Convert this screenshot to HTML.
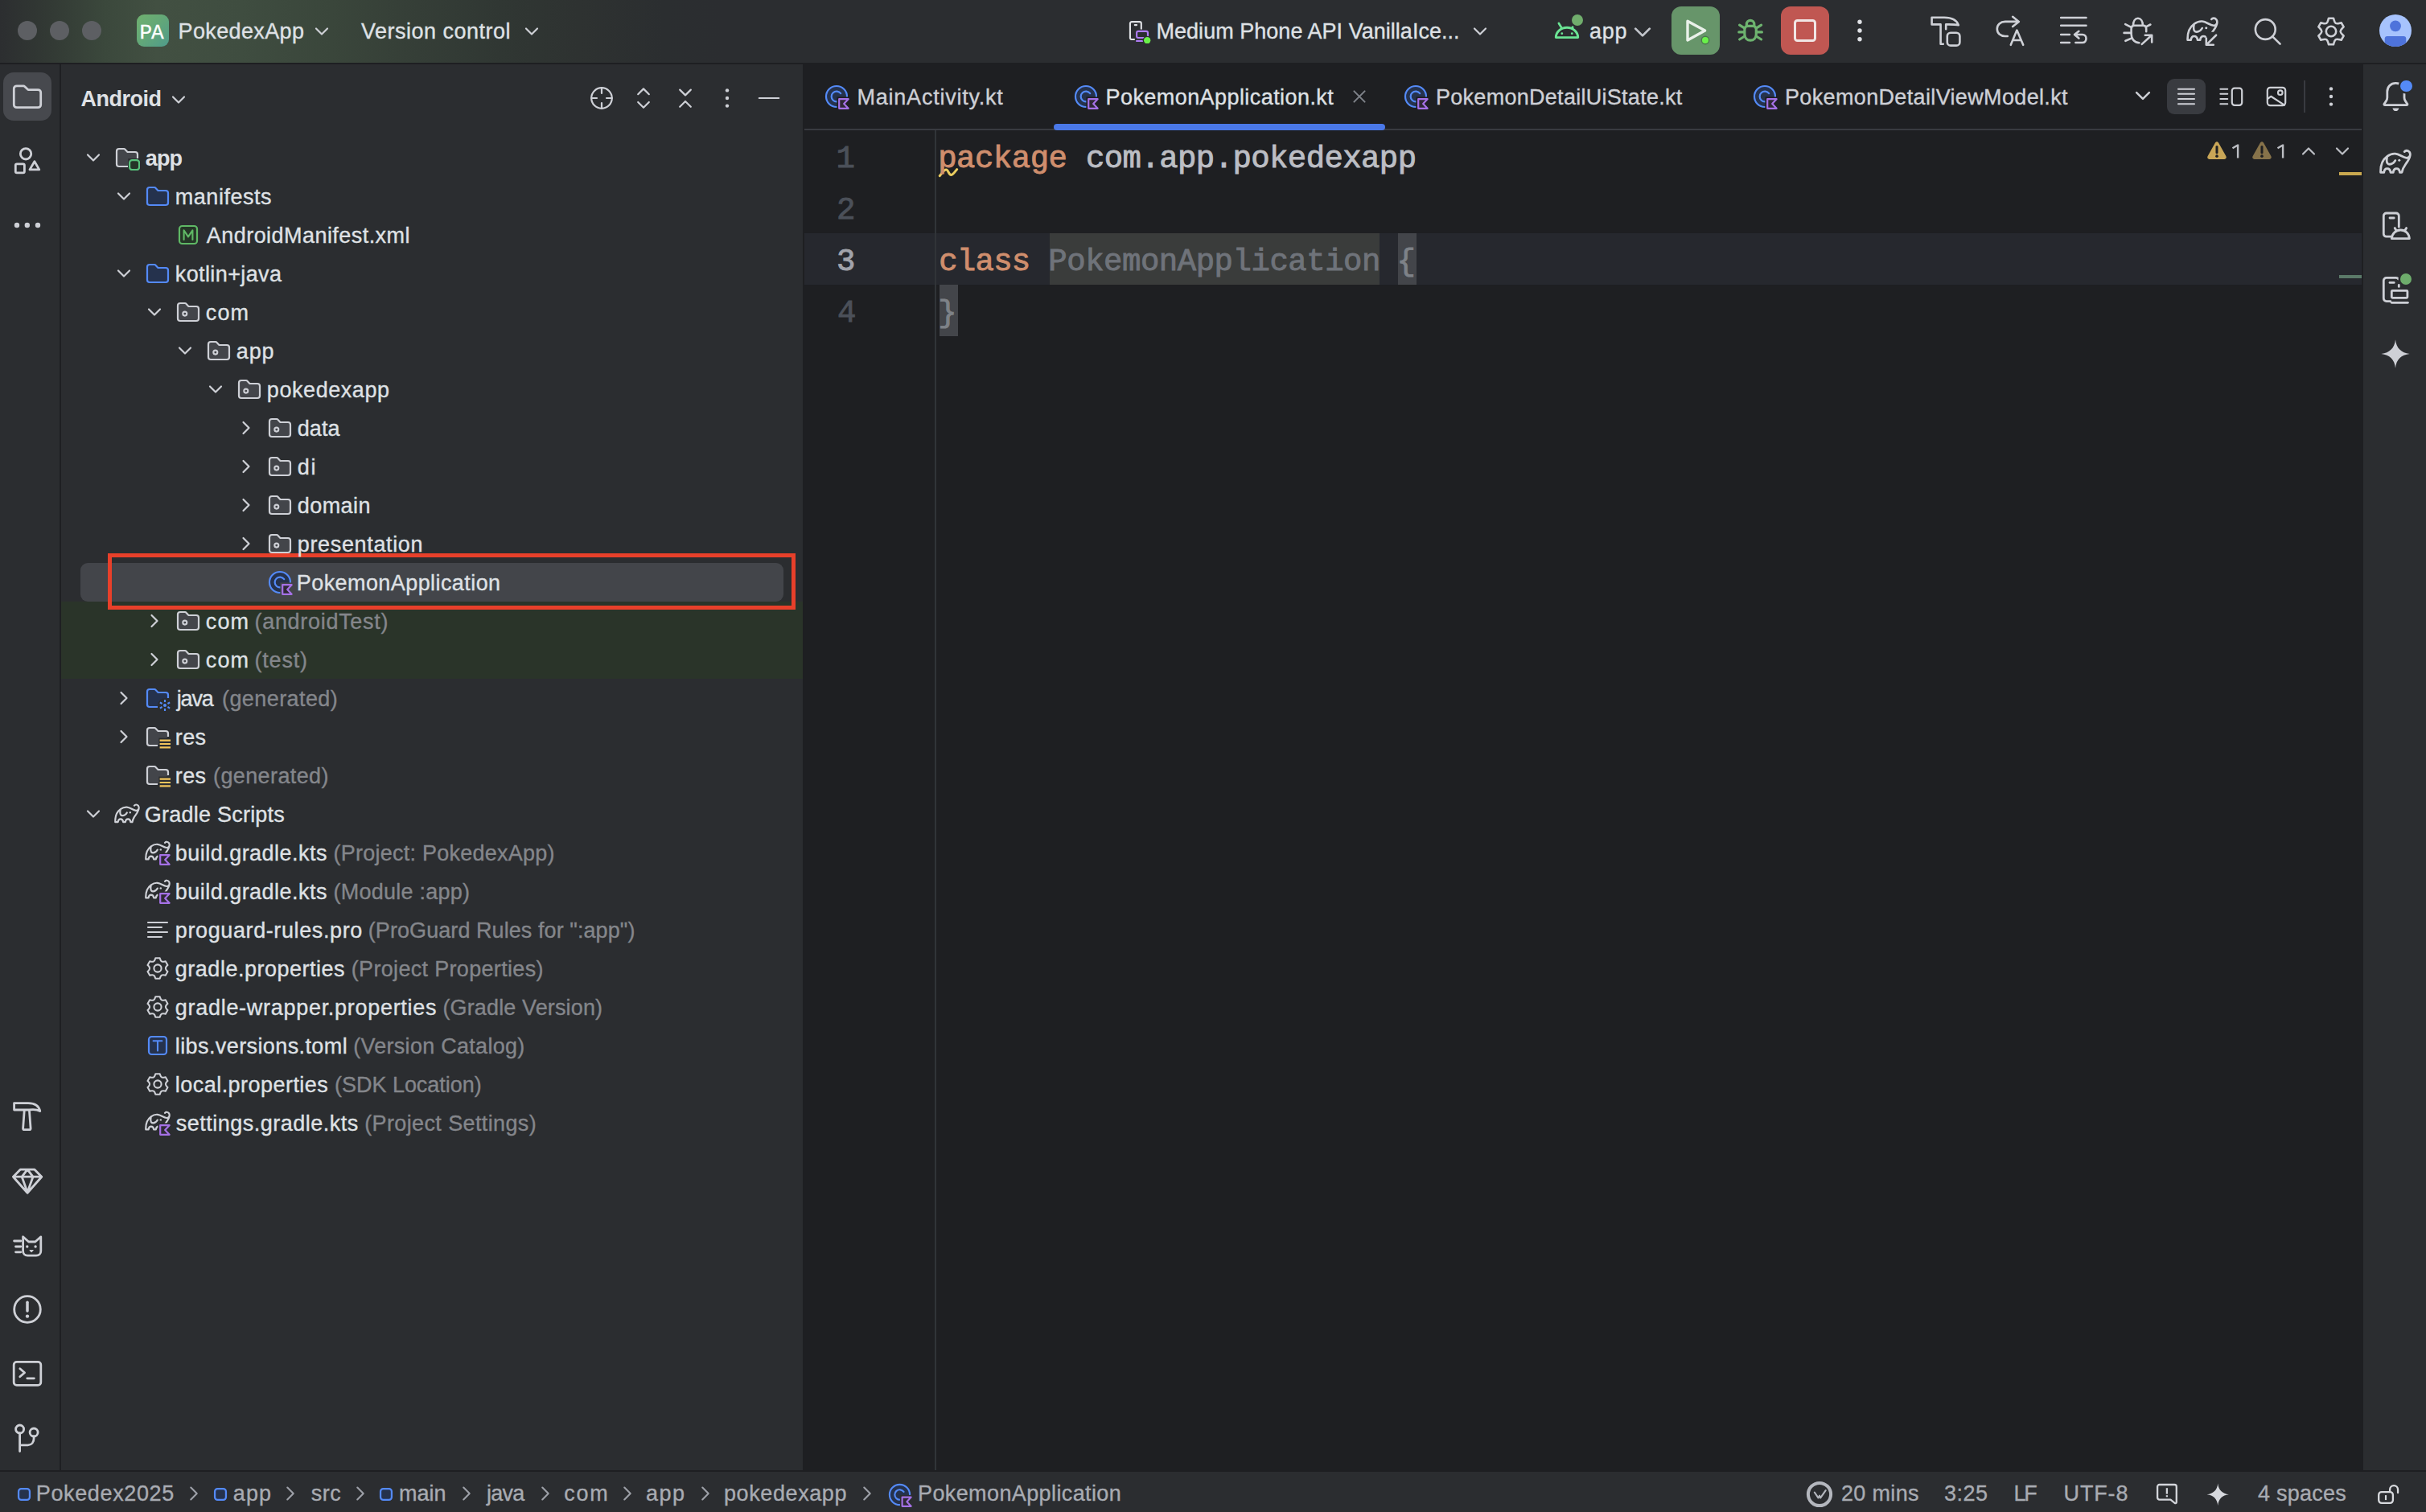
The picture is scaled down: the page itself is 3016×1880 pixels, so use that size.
<!DOCTYPE html>
<html><head><meta charset="utf-8"><title>PokedexApp</title>
<style>
html,body{margin:0;padding:0;background:#2b2d30;}
body{width:3016px;height:1880px;position:relative;overflow:hidden;font-family:"Liberation Sans", sans-serif;}
body>div,body>svg,body>span{position:absolute;display:block}
span{white-space:pre;}
span.s{font-family:"Liberation Sans", sans-serif;-webkit-text-stroke:0.35px;}
span.m{font-family:"Liberation Mono", monospace;-webkit-text-stroke:0.9px;}
</style></head><body>
<div style="left:0px;top:0px;width:3016px;height:78px;background:#2b2d30;"></div>
<div style="left:0;top:0;width:900px;height:78px;background:linear-gradient(90deg,#2c2e30 0px,#323934 60px,#3b483c 130px,#425042 194px,#3f4d40 300px,#3a463b 412px,#353e37 520px,#303733 620px,#2e3231 720px,#2b2e30 825px,#2b2d30 900px)"></div>
<div style="left:0px;top:78px;width:3016px;height:2px;background:#1e1f22;"></div>
<div style="left:0px;top:80px;width:74px;height:1748px;background:#2b2d30;"></div>
<div style="left:74px;top:80px;width:2px;height:1748px;background:#1e1f22;"></div>
<div style="left:76px;top:80px;width:922px;height:1748px;background:#2b2d30;"></div>
<div style="left:998px;top:78px;width:1940px;height:1750px;background:#1e1f22;"></div>
<div style="left:2938px;top:80px;width:78px;height:1748px;background:#2b2d30;"></div>
<div style="left:0px;top:1828px;width:3016px;height:2px;background:#1e1f22;"></div>
<div style="left:0px;top:1830px;width:3016px;height:50px;background:#2b2d30;"></div>
<div style="left:22px;top:26px;width:24px;height:24px;background:#5d5f63;border-radius:12px;"></div>
<div style="left:62px;top:26px;width:24px;height:24px;background:#5d5f63;border-radius:12px;"></div>
<div style="left:102px;top:26px;width:24px;height:24px;background:#5d5f63;border-radius:12px;"></div>
<div style="left:170px;top:18px;width:40px;height:40px;border-radius:9px;background:linear-gradient(135deg,#6fb06f 0%,#64a877 45%,#4f9b8b 100%)"></div>
<span class="m" style="left:173.6px;top:26px;font-size:26px;line-height:30px;letter-spacing:-1.2px;color:#ffffff;-webkit-text-stroke:0.3px;">PA</span>
<span class="s" style="left:221.5px;top:24px;font-size:27px;line-height:30px;letter-spacing:0.38px;color:#dfe1e5;">PokedexApp</span>
<svg style="left:384.0px;top:22.6px;" width="32" height="32" viewBox="0 0 16 16" fill="none"><path d="M4.5 6.25L8 9.75L11.5 6.25" stroke="#ced0d6" stroke-width="1.1" stroke-linecap="round" stroke-linejoin="round"/></svg>
<span class="s" style="left:449px;top:24px;font-size:27px;line-height:30px;letter-spacing:0.49px;color:#dfe1e5;">Version control</span>
<svg style="left:644.5px;top:22.6px;" width="32" height="32" viewBox="0 0 16 16" fill="none"><path d="M4.5 6.25L8 9.75L11.5 6.25" stroke="#ced0d6" stroke-width="1.1" stroke-linecap="round" stroke-linejoin="round"/></svg>
<svg style="left:1400.0px;top:22.0px;" width="32" height="32" viewBox="0 0 16 16" fill="none"><path d="M5 13.5H3.5C2.93 13.5 2.47 13.04 2.47 12.47V3.56C2.47 2.99 2.93 2.53 3.5 2.53H8.37C8.94 2.53 9.4 2.99 9.4 3.56V6.9" stroke="#dfe1e5" stroke-width="1.07" stroke-linecap="round" stroke-linejoin="round" /><path d="M5.4 4.55H6.55" stroke="#dfe1e5" stroke-width="1.07" stroke-linecap="round" stroke-linejoin="round" /><rect x="6.57" y="8.43" width="6.91" height="4.07" rx="1" stroke="#ae7bf3" stroke-width="1.07"/><path d="M6.1 14.48H12" stroke="#ae7bf3" stroke-width="1.07"/><circle cx="13.1" cy="14.1" r="2.75" fill="#2b2d30"/><circle cx="13.1" cy="14.1" r="2.07" fill="#6af04a"/></svg>
<span class="s" style="left:1437.5px;top:24px;font-size:27px;line-height:30px;letter-spacing:0.03px;color:#dfe1e5;">Medium Phone API VanillaIce...</span>
<svg style="left:1824.0px;top:22.6px;" width="32" height="32" viewBox="0 0 16 16" fill="none"><path d="M4.5 6.25L8 9.75L11.5 6.25" stroke="#ced0d6" stroke-width="1.1" stroke-linecap="round" stroke-linejoin="round"/></svg>
<svg style="left:1930px;top:22px;" width="36" height="30" viewBox="0 0 36 30" fill="none"><path d="M4.3 24.6A13.7 12.3 0 0 1 31.7 24.6Z" stroke="#6be494" stroke-width="2.9" stroke-linecap="round" stroke-linejoin="round" /><path d="M7.9 7L11.6 13M28.1 7L24.4 13" stroke="#6be494" stroke-width="2.7" stroke-linecap="round" stroke-linejoin="round" /><circle cx="11.8" cy="19.7" r="1.4" fill="#6be494"/><circle cx="24.3" cy="19.7" r="1.4" fill="#6be494"/></svg>
<div style="left:1953.9px;top:17.7px;width:14.4px;height:14.4px;border-radius:50%;background:#70ad6c;box-shadow:0 0 0 2.6px #2b2d30"></div>
<span class="s" style="left:1976px;top:24px;font-size:27px;line-height:30px;letter-spacing:0.73px;color:#dfe1e5;">app</span>
<svg style="left:2022.0px;top:20.2px;" width="40" height="40" viewBox="0 0 16 16" fill="none"><path d="M4.5 6.25L8 9.75L11.5 6.25" stroke="#c2c5cb" stroke-width="1.1" stroke-linecap="round" stroke-linejoin="round"/></svg>
<div style="left:2078px;top:8px;width:60px;height:60px;background:#67956a;border-radius:12px;"></div>
<svg style="left:2088.0px;top:18.0px;" width="40" height="40" viewBox="0 0 20 20" fill="none"><path d="M5 4.1L15.8 10.05L5 16Z" stroke="#e9f1e9" stroke-width="1.7" stroke-linecap="round" stroke-linejoin="round" /></svg>
<div style="left:2116.4px;top:46.25px;width:7.8px;height:7.8px;border-radius:50%;background:#6af04a;box-shadow:0 0 0 1.4px #4a784c"></div>
<svg style="left:2156.0px;top:18.0px;" width="40" height="40" viewBox="0 0 20 20" fill="none"><path d="M6.45 9.3C6.45 8 7.3 7.15 8.5 7.15H11.6C12.8 7.15 13.65 8 13.65 9.3V12.4C13.65 14.6 12.1 16.1 10.05 16.1C8 16.1 6.45 14.6 6.45 12.4Z" stroke="#6db36f" stroke-width="1.6" stroke-linecap="round" stroke-linejoin="round" /><path d="M7.7 7V6A2.35 2.35 0 0 1 12.4 6V7" stroke="#6db36f" stroke-width="1.6" stroke-linecap="round" stroke-linejoin="round" /><path d="M2.9 10.95H6.3M13.8 10.95H17.2M3.3 6.6L6.5 8.6M16.8 6.6L13.6 8.6M3.3 15.5L6.5 13.5M16.8 15.5L13.6 13.5" stroke="#6db36f" stroke-width="1.6" stroke-linecap="round" stroke-linejoin="round" /></svg>
<div style="left:2214px;top:8px;width:60px;height:60px;background:#c05752;border-radius:12px;"></div>
<div style="left:2230px;top:24.2px;width:28px;height:27.6px;border-radius:4.5px;border:3px solid #f1e6e5;box-sizing:border-box"></div>
<svg style="left:2292.0px;top:18.0px;" width="40" height="40" viewBox="0 0 20 20" fill="none"><circle cx="10" cy="4.6" r="1.35" fill="#dfe1e5"/><circle cx="10" cy="10" r="1.35" fill="#dfe1e5"/><circle cx="10" cy="15.4" r="1.35" fill="#dfe1e5"/></svg>
<svg style="left:2398.6px;top:18.5px;" width="40" height="40" viewBox="0 0 20 20" fill="none"><path d="M1.3 1.4H9C13.6 1.4 16.8 3 17.9 6.1C15.6 5.6 13.2 5.7 10.1 5.7V8.6M6.8 5.7V17.9H8.4M6.8 5.7H1.3V1.4" stroke="#ced0d6" stroke-width="1.3" stroke-linecap="round" stroke-linejoin="round" /><rect x="10.9" y="10.9" width="7.8" height="7.9" rx="2.1" stroke="#ced0d6" stroke-width="1.3"/></svg>
<svg style="left:2478.5px;top:18.5px;" width="40" height="40" viewBox="0 0 20 20" fill="none"><path d="M15.2 3.95H6.9C4 3.95 1.9 5.8 1.9 8.5C1.9 11.2 4 13 6.9 13H8.4M11.6 0.9L15.4 3.95L11.6 7" stroke="#ced0d6" stroke-width="1.3" stroke-linecap="round" stroke-linejoin="round" /><path d="M10.4 18.4L14.2 9.3L18.1 18.4M11.6 15.5H16.9" stroke="#ced0d6" stroke-width="1.3" stroke-linecap="round" stroke-linejoin="round" /></svg>
<svg style="left:2558.0px;top:18.5px;" width="40" height="40" viewBox="0 0 20 20" fill="none"><path d="M2.1 1.5H17.75M2.1 6.4H17.75M2.1 12H7.45M2.1 17H7.45" stroke="#ced0d6" stroke-width="1.3" stroke-linecap="round" stroke-linejoin="round" /><path d="M10.6 12H15.4C16.9 12 17.75 13.1 17.75 14.5C17.75 15.9 16.9 17 15.4 17H11.2M13.2 9.9L10.5 12L13.2 14.3" stroke="#ced0d6" stroke-width="1.3" stroke-linecap="round" stroke-linejoin="round" /></svg>
<svg style="left:2638.0px;top:18.5px;" width="40" height="40" viewBox="0 0 20 20" fill="none"><path d="M10.7 17.1C7.6 17 5.8 14.6 5.8 11.6V8.4C5.8 7.2 6.6 6.4 7.8 6.4H13.2C14.4 6.4 15.1 7.3 15.1 8.4V10.1" stroke="#ced0d6" stroke-width="1.3" stroke-linecap="round" stroke-linejoin="round" /><path d="M7 6.3C7 3.6 8.2 1.9 9.95 1.9C11.7 1.9 12.95 3.6 12.95 6.3" stroke="#ced0d6" stroke-width="1.3" stroke-linecap="round" stroke-linejoin="round" /><path d="M5.8 10.95H1.3M6 7.6L2.1 5.6M6.2 14.2L2.2 15.9M14.9 7.2L17.7 5.75" stroke="#ced0d6" stroke-width="1.3" stroke-linecap="round" stroke-linejoin="round" /><path d="M12.4 17.95L18.5 12.4M14.4 12.35H18.6V16.7" stroke="#ced0d6" stroke-width="1.3" stroke-linecap="round" stroke-linejoin="round" /></svg>
<svg style="left:2718.0px;top:18.5px;" width="40" height="40" viewBox="0 0 20 20" fill="none"><defs><clipPath id="syc"><path d="M-1 -1H21V10.4H15.4L10.6 15.2V21H-1Z"/></clipPath></defs><g clip-path="url(#syc)"><g transform="translate(0,-1) scale(1.25)"><path d="M12.5 2.8C13 2.1 14.2 2 15 3C15.8 4.2 15.2 6 13.5 8.4C12.6 9.7 11.6 10.8 11.2 13.1H10.2C10.1 12.2 9.6 11.2 8.55 11.2C7.5 11.2 7 12.2 6.9 13.1H5.6C5.5 12.2 5 11.2 3.9 11.2C2.8 11.2 2.4 12.2 2.3 13.1H0.65C0.5 9.5 1.8 6.6 3.9 5.1C5.2 4.1 6.6 3.7 7.9 3.8C10 4 11.6 5.7 13.5 5.9C14.3 5.95 14.8 5.6 15.1 5M3.9 5.1C3.6 6.5 3.5 7.8 4 8.5C4.7 9.4 6 9 6.9 8.4C7.4 8 7.7 7.6 7.9 7.2" stroke="#ced0d6" stroke-width="1.04" stroke-linecap="round" stroke-linejoin="round" /><circle cx="9.9" cy="7.1" r="0.6" fill="#ced0d6"/></g></g><path d="M18.55 12.35L12.5 18.3M12.4 14.25V18.4H16.9" stroke="#ced0d6" stroke-width="1.3" stroke-linecap="round" stroke-linejoin="round" /></svg>
<svg style="left:2798.7px;top:18.5px;" width="40" height="40" viewBox="0 0 20 20" fill="none"><circle cx="8.65" cy="8.75" r="6.2" stroke="#ced0d6" stroke-width="1.3"/><path d="M13.2 13.3L17.8 17.8" stroke="#ced0d6" stroke-width="1.3" stroke-linecap="round" stroke-linejoin="round" /></svg>
<svg style="left:2878.0px;top:18.6px;" width="40" height="40" viewBox="0 0 20 20" fill="none"><path d="M8.50 1.84L11.50 1.84C11.90 3.12 11.94 4.37 12.90 4.98C13.90 5.51 15.01 4.92 16.32 4.62L16.32 4.62L17.82 7.22C16.91 8.20 15.84 8.86 15.80 10.00C15.84 11.14 16.91 11.80 17.82 12.78L17.82 12.78L16.32 15.38C15.01 15.08 13.90 14.49 12.90 15.02C11.94 15.63 11.90 16.88 11.50 18.16L11.50 18.16L8.50 18.16C8.10 16.88 8.06 15.63 7.10 15.02C6.10 14.49 4.99 15.08 3.68 15.38L3.68 15.38L2.18 12.78C3.09 11.80 4.16 11.14 4.20 10.00C4.16 8.86 3.09 8.20 2.18 7.22L2.18 7.22L3.68 4.62C4.99 4.92 6.10 5.51 7.10 4.98C8.06 4.37 8.10 3.12 8.50 1.84Z" stroke="#ced0d6" stroke-width="1.3" stroke-linejoin="round"/><circle cx="10" cy="10" r="3.1" stroke="#ced0d6" stroke-width="1.3"/></svg>
<svg style="left:2958.0px;top:18.0px;" width="40" height="40" viewBox="0 0 20 20" fill="none"><defs><clipPath id="avc"><circle cx="10" cy="10" r="10"/></clipPath></defs><circle cx="10" cy="10" r="10" fill="#a7c3fd"/><g clip-path="url(#avc)"><circle cx="10" cy="7.15" r="3.45" fill="#4e73db"/><path d="M3.35 20V15C3.35 14.1 4 13.5 4.9 13.5H15.1C16 13.5 16.65 14.1 16.65 15V20Z" fill="#4e73db"/></g></svg>
<div style="left:4px;top:90px;width:60px;height:60px;background:#47494e;border-radius:13px;"></div>
<svg style="left:14.0px;top:100.0px;" width="40" height="40" viewBox="0 0 20 20" fill="none"><path d="M10.3 5.6L10.5 5.8H16.6C17.6 5.8 18.35 6.55 18.35 7.55V15.1C18.35 16.1 17.6 16.85 16.6 16.85H3.4C2.4 16.85 1.65 16.1 1.65 15.1V5.15C1.65 4.15 2.4 3.4 3.4 3.4H7.6C7.9 3.4 8.1 3.5 8.3 3.7L10.3 5.6Z" stroke="#ced0d6" stroke-width="1.4" stroke-linecap="round" stroke-linejoin="round" /></svg>
<svg style="left:14.0px;top:180.5px;" width="40" height="40" viewBox="0 0 20 20" fill="none"><circle cx="9.03" cy="5.15" r="3.35" stroke="#ced0d6" stroke-width="1.4"/><rect x="2.65" y="11.4" width="5.55" height="5.55" rx="0.8" stroke="#ced0d6" stroke-width="1.4"/><path d="M14.45 9.9L17.4 14.95H11.5Z" stroke="#ced0d6" stroke-width="1.4" stroke-linecap="round" stroke-linejoin="round" /></svg>
<svg style="left:14.0px;top:260.0px;" width="40" height="40" viewBox="0 0 20 20" fill="none"><circle cx="3.5" cy="10" r="1.6" fill="#ced0d6"/><circle cx="9.9" cy="10" r="1.6" fill="#ced0d6"/><circle cx="16.5" cy="10" r="1.6" fill="#ced0d6"/></svg>
<svg style="left:14.0px;top:1368.0px;" width="40" height="40" viewBox="0 0 20 20" fill="none"><path d="M1.8 1.8H10.5C14.6 1.8 17.2 3.6 17.9 6.8C15.8 5.6 13.8 5.7 11.2 6L12.05 17.6C12.07 18 11.8 18.3 11.4 18.3H7.95C7.55 18.3 7.28 18 7.3 17.6L8.15 6H1.8ZM8.15 6H11.2" stroke="#ced0d6" stroke-width="1.4" stroke-linecap="round" stroke-linejoin="round" /></svg>
<svg style="left:14.0px;top:1447.5px;" width="40" height="40" viewBox="0 0 20 20" fill="none"><path d="M1.2 7.6L5.6 3.1H14.5L18.9 7.6L10.05 17.6ZM1.2 7.6H18.9M6.6 7.6L10.05 3.1L13.5 7.6M6.6 7.6L10.05 17.2M13.5 7.6L10.05 17.2" stroke="#ced0d6" stroke-width="1.4" stroke-linecap="round" stroke-linejoin="round" /></svg>
<svg style="left:14.0px;top:1529.3px;" width="40" height="40" viewBox="0 0 20 20" fill="none"><path d="M7.3 4.4V13.2C7.3 14.9 8.5 16.05 10.2 16.05H15.5C17.2 16.05 18.4 14.9 18.4 13.2V4.4L14.9 7.5H10.8L7.3 4.4Z" stroke="#ced0d6" stroke-width="1.4" stroke-linecap="round" stroke-linejoin="round" /><path d="M1.8 7H5.9M2.75 10.5H5.9M2.75 13.9H5.9" stroke="#ced0d6" stroke-width="1.4" stroke-linecap="round" stroke-linejoin="round" /><circle cx="9.9" cy="10.5" r="0.85" fill="#ced0d6"/><circle cx="15.05" cy="10.5" r="0.85" fill="#ced0d6"/><path d="M11.4 12.8H13.7L12.55 13.9Z" fill="#ced0d6" stroke="#ced0d6" stroke-width="0.5" stroke-linejoin="round"/></svg>
<svg style="left:14.0px;top:1607.5px;" width="40" height="40" viewBox="0 0 20 20" fill="none"><circle cx="10" cy="10" r="8.15" stroke="#ced0d6" stroke-width="1.4"/><path d="M10 5.6V11" stroke="#ced0d6" stroke-width="1.75" stroke-linecap="round" stroke-linejoin="round" /><circle cx="10" cy="14.3" r="1.1" fill="#ced0d6"/></svg>
<svg style="left:14.0px;top:1688.0px;" width="40" height="40" viewBox="0 0 20 20" fill="none"><rect x="1.6" y="2.7" width="16.8" height="14.5" rx="1.8" stroke="#ced0d6" stroke-width="1.4"/><path d="M5.4 6.9L8.3 9.4L5.4 11.9M9.9 12.9H14.2" stroke="#ced0d6" stroke-width="1.4" stroke-linecap="round" stroke-linejoin="round" /></svg>
<svg style="left:14.0px;top:1766.5px;" width="40" height="40" viewBox="0 0 20 20" fill="none"><circle cx="5.3" cy="5" r="2.5" stroke="#ced0d6" stroke-width="1.4"/><circle cx="14.05" cy="7" r="2.5" stroke="#ced0d6" stroke-width="1.4"/><path d="M5.3 7.5V18.8M14.05 9.5V10.6C14.05 13.2 12.6 14.9 10.3 14.9H5.3" stroke="#ced0d6" stroke-width="1.4" stroke-linecap="round" stroke-linejoin="round" /></svg>
<svg style="left:2957.5px;top:100.0px;" width="40" height="40" viewBox="0 0 20 20" fill="none"><path d="M10.2 1.7C7 1.7 4.9 4 4.9 7V10.6C4.9 11.4 4.7 12 4.3 12.7L3 14.6C2.8 15 3 15.35 3.5 15.35H16.9C17.4 15.35 17.6 15 17.4 14.6L16.1 12.7C15.7 12 15.5 11.4 15.5 10.6V7C15.5 4 13.4 1.7 10.2 1.7Z" stroke="#ced0d6" stroke-width="1.4" stroke-linecap="round" stroke-linejoin="round" /><path d="M8.2 17.2H12.2C11.9 18.4 11.2 19 10.2 19C9.2 19 8.5 18.4 8.2 17.2Z" fill="#ced0d6"/></svg>
<div style="left:2984.2px;top:99.6px;width:14.8px;height:14.8px;border-radius:50%;background:#548af7;box-shadow:0 0 0 2.5px #2b2d30"></div>
<svg style="left:2958.0px;top:180.5px;" width="40" height="40" viewBox="0 0 20 20" fill="none"><g transform="translate(0,0.3) scale(1.25)"><path d="M12.5 2.8C13 2.1 14.2 2 15 3C15.8 4.2 15.2 6 13.5 8.4C12.6 9.7 11.6 10.8 11.2 13.1H10.2C10.1 12.2 9.6 11.2 8.55 11.2C7.5 11.2 7 12.2 6.9 13.1H5.6C5.5 12.2 5 11.2 3.9 11.2C2.8 11.2 2.4 12.2 2.3 13.1H0.65C0.5 9.5 1.8 6.6 3.9 5.1C5.2 4.1 6.6 3.7 7.9 3.8C10 4 11.6 5.7 13.5 5.9C14.3 5.95 14.8 5.6 15.1 5M3.9 5.1C3.6 6.5 3.5 7.8 4 8.5C4.7 9.4 6 9 6.9 8.4C7.4 8 7.7 7.6 7.9 7.2" stroke="#ced0d6" stroke-width="1.12" stroke-linecap="round" stroke-linejoin="round" /><circle cx="9.9" cy="7.1" r="0.6" fill="#ced0d6"/></g></svg>
<svg style="left:2958.0px;top:261.0px;" width="40" height="40" viewBox="0 0 20 20" fill="none"><path d="M7.2 16.6H4.4C3.4 16.6 2.65 15.85 2.65 14.85V3.75C2.65 2.75 3.4 2 4.4 2H10.4C11.4 2 12.15 2.75 12.15 3.75V10.6" stroke="#ced0d6" stroke-width="1.4" stroke-linecap="round" stroke-linejoin="round" /><path d="M6.5 5H9.1" stroke="#ced0d6" stroke-width="1.4" stroke-linecap="round" stroke-linejoin="round" /><path d="M7.65 17.85C7.9 14.6 10.2 12.5 13.2 12.5C16.2 12.5 18.5 14.6 18.7 17.85ZM9.6 11.3L10.8 13.1M16.8 11.3L15.6 13.1" stroke="#ced0d6" stroke-width="1.4" stroke-linecap="round" stroke-linejoin="round" /></svg>
<svg style="left:2958.0px;top:340.0px;" width="40" height="40" viewBox="0 0 20 20" fill="none"><path d="M6.9 17.3H4.4C3.4 17.3 2.65 16.55 2.65 15.55V4.45C2.65 3.45 3.4 2.7 4.4 2.7H10.4C11 2.7 11.5 3 11.8 3.4M12.15 7.2V8.2" stroke="#ced0d6" stroke-width="1.4" stroke-linecap="round" stroke-linejoin="round" /><path d="M6.5 5.7H9.1" stroke="#ced0d6" stroke-width="1.4" stroke-linecap="round" stroke-linejoin="round" /><rect x="7.65" y="10.65" width="9.8" height="4.5" rx="0.5" stroke="#ced0d6" stroke-width="1.4"/><path d="M7.6 18.15H17.7" stroke="#ced0d6" stroke-width="1.4" stroke-linecap="round" stroke-linejoin="round" /></svg>
<div style="left:2984px;top:339.9px;width:14.2px;height:14.2px;border-radius:50%;background:#6ead6c;box-shadow:0 0 0 2.5px #2b2d30"></div>
<svg style="left:2957.0px;top:418.5px;" width="42" height="42" viewBox="0 0 20 20" fill="none"><path d="M10 1.6C10.5 6.6 13.4 9.5 18.4 10C13.4 10.5 10.5 13.4 10 18.4C9.5 13.4 6.6 10.5 1.6 10C6.6 9.5 9.5 6.6 10 1.6Z" fill="#ced0d6"/></svg>
<span class="s" style="left:100.5px;top:108px;font-size:27px;line-height:30px;letter-spacing:-0.5px;color:#dfe1e5;font-weight:700;-webkit-text-stroke:0;">Android</span>
<svg style="left:206.0px;top:107.5px;" width="32" height="32" viewBox="0 0 16 16" fill="none"><path d="M4.5 6.25L8 9.75L11.5 6.25" stroke="#ced0d6" stroke-width="1.1" stroke-linecap="round" stroke-linejoin="round"/></svg>
<svg style="left:732.0px;top:106.0px;" width="32" height="32" viewBox="0 0 16 16" fill="none"><circle cx="8" cy="8" r="6.4" stroke="#ced0d6" stroke-width="1.1"/><path d="M8 1.6V5M8 11V14.4M1.6 8H5M11 8H14.4" stroke="#ced0d6" stroke-width="1.1" stroke-linecap="round" stroke-linejoin="round" /></svg>
<svg style="left:784.0px;top:106.0px;" width="32" height="32" viewBox="0 0 16 16" fill="none"><path d="M4.6 5.6L8 2.2L11.4 5.6M4.6 10.5L8 13.9L11.4 10.5" stroke="#ced0d6" stroke-width="1.1" stroke-linecap="round" stroke-linejoin="round" /></svg>
<svg style="left:836.0px;top:106.0px;" width="32" height="32" viewBox="0 0 16 16" fill="none"><path d="M4.6 2.8L8 6.2L11.4 2.8M4.6 13.4L8 10L11.4 13.4" stroke="#ced0d6" stroke-width="1.1" stroke-linecap="round" stroke-linejoin="round" /></svg>
<svg style="left:888.0px;top:106.0px;" width="32" height="32" viewBox="0 0 16 16" fill="none"><circle cx="8" cy="3.2" r="1.1" fill="#ced0d6"/><circle cx="8" cy="8" r="1.1" fill="#ced0d6"/><circle cx="8" cy="12.8" r="1.1" fill="#ced0d6"/></svg>
<svg style="left:939.5px;top:106.0px;" width="32" height="32" viewBox="0 0 16 16" fill="none"><path d="M1.9 8H14.1" stroke="#ced0d6" stroke-width="1.1" stroke-linecap="round" stroke-linejoin="round" /></svg>
<div style="left:76px;top:748px;width:922px;height:96px;background:#2a3429;"></div>
<div style="left:100px;top:700px;width:874px;height:48px;background:#43454a;border-radius:9px;"></div>
<div style="left:134px;top:687.5px;width:855px;height:70.5px;box-sizing:border-box;border:5px solid #e8402a"></div>
<svg style="left:100.0px;top:180.4px;" width="32" height="32" viewBox="0 0 16 16" fill="none"><path d="M4.5 6.25L8 9.75L11.5 6.25" stroke="#ced0d6" stroke-width="1.1" stroke-linecap="round" stroke-linejoin="round"/></svg>
<svg style="left:142.0px;top:180.0px;" width="32" height="32" viewBox="0 0 16 16" fill="none"><path d="M8.5 13.5H3C2.17 13.5 1.5 12.83 1.5 12V4C1.5 3.17 2.17 2.5 3 2.5H6.1C6.25 2.5 6.39 2.56 6.48 2.65L8.25 4.5H13C13.83 4.5 14.5 5.17 14.5 6V8.5" fill="#43454a" stroke="#ced0d6" stroke-width="1.1"/><rect x="8.6" y="8.6" width="8" height="8" fill="#2b2d30"/><rect x="9.55" y="9.55" width="6" height="6" rx="1.6" fill="#253627" stroke="#57c27a" stroke-width="1.1"/></svg>
<span class="s" style="left:180.8px;top:182px;font-size:27px;line-height:30px;letter-spacing:-0.9px;color:#dfe1e5;font-weight:700;-webkit-text-stroke:0;">app</span>
<svg style="left:138.0px;top:228.4px;" width="32" height="32" viewBox="0 0 16 16" fill="none"><path d="M4.5 6.25L8 9.75L11.5 6.25" stroke="#ced0d6" stroke-width="1.1" stroke-linecap="round" stroke-linejoin="round"/></svg>
<svg style="left:180.0px;top:228.0px;" width="32" height="32" viewBox="0 0 16 16" fill="none"><path d="M8.1 4.35L8.25 4.5H13C13.83 4.5 14.5 5.17 14.5 6V12C14.5 12.83 13.83 13.5 13 13.5H3C2.17 13.5 1.5 12.83 1.5 12V4C1.5 3.17 2.17 2.5 3 2.5H6.1C6.25 2.5 6.39 2.56 6.48 2.65L8.1 4.35Z" fill="#25324d" stroke="#548af7" stroke-width="1.1"/></svg>
<span class="s" style="left:217.8px;top:230px;font-size:27px;line-height:30px;letter-spacing:0.52px;color:#dfe1e5;">manifests</span>
<svg style="left:218.0px;top:276.0px;" width="32" height="32" viewBox="0 0 16 16" fill="none"><rect x="2.5" y="2.5" width="11" height="11" rx="1.8" fill="#253627" stroke="#5fb865" stroke-width="1.1"/><path d="M5.3 11V5.2L8 9.2L10.7 5.2V11" stroke="#5fb865" stroke-width="1.05" stroke-linejoin="round" stroke-linecap="round"/></svg>
<span class="s" style="left:256.8px;top:278px;font-size:27px;line-height:30px;letter-spacing:0.45px;color:#dfe1e5;">AndroidManifest.xml</span>
<svg style="left:138.0px;top:324.4px;" width="32" height="32" viewBox="0 0 16 16" fill="none"><path d="M4.5 6.25L8 9.75L11.5 6.25" stroke="#ced0d6" stroke-width="1.1" stroke-linecap="round" stroke-linejoin="round"/></svg>
<svg style="left:180.0px;top:324.0px;" width="32" height="32" viewBox="0 0 16 16" fill="none"><path d="M8.1 4.35L8.25 4.5H13C13.83 4.5 14.5 5.17 14.5 6V12C14.5 12.83 13.83 13.5 13 13.5H3C2.17 13.5 1.5 12.83 1.5 12V4C1.5 3.17 2.17 2.5 3 2.5H6.1C6.25 2.5 6.39 2.56 6.48 2.65L8.1 4.35Z" fill="#25324d" stroke="#548af7" stroke-width="1.1"/></svg>
<span class="s" style="left:217.8px;top:326px;font-size:27px;line-height:30px;letter-spacing:0.39px;color:#dfe1e5;">kotlin+java</span>
<svg style="left:176.0px;top:372.4px;" width="32" height="32" viewBox="0 0 16 16" fill="none"><path d="M4.5 6.25L8 9.75L11.5 6.25" stroke="#ced0d6" stroke-width="1.1" stroke-linecap="round" stroke-linejoin="round"/></svg>
<svg style="left:218.0px;top:372.0px;" width="32" height="32" viewBox="0 0 16 16" fill="none"><path d="M8.1 4.35L8.25 4.5H13C13.83 4.5 14.5 5.17 14.5 6V12C14.5 12.83 13.83 13.5 13 13.5H3C2.17 13.5 1.5 12.83 1.5 12V4C1.5 3.17 2.17 2.5 3 2.5H6.1C6.25 2.5 6.39 2.56 6.48 2.65L8.1 4.35Z" fill="#43454a" stroke="#ced0d6" stroke-width="1.1"/><circle cx="5.9" cy="9.05" r="1.25" stroke="#ced0d6" stroke-width="1.05"/></svg>
<span class="s" style="left:255.8px;top:374px;font-size:27px;line-height:30px;letter-spacing:1.09px;color:#dfe1e5;">com</span>
<svg style="left:214.0px;top:420.4px;" width="32" height="32" viewBox="0 0 16 16" fill="none"><path d="M4.5 6.25L8 9.75L11.5 6.25" stroke="#ced0d6" stroke-width="1.1" stroke-linecap="round" stroke-linejoin="round"/></svg>
<svg style="left:256.0px;top:420.0px;" width="32" height="32" viewBox="0 0 16 16" fill="none"><path d="M8.1 4.35L8.25 4.5H13C13.83 4.5 14.5 5.17 14.5 6V12C14.5 12.83 13.83 13.5 13 13.5H3C2.17 13.5 1.5 12.83 1.5 12V4C1.5 3.17 2.17 2.5 3 2.5H6.1C6.25 2.5 6.39 2.56 6.48 2.65L8.1 4.35Z" fill="#43454a" stroke="#ced0d6" stroke-width="1.1"/><circle cx="5.9" cy="9.05" r="1.25" stroke="#ced0d6" stroke-width="1.05"/></svg>
<span class="s" style="left:293.8px;top:422px;font-size:27px;line-height:30px;letter-spacing:0.83px;color:#dfe1e5;">app</span>
<svg style="left:252.0px;top:468.4px;" width="32" height="32" viewBox="0 0 16 16" fill="none"><path d="M4.5 6.25L8 9.75L11.5 6.25" stroke="#ced0d6" stroke-width="1.1" stroke-linecap="round" stroke-linejoin="round"/></svg>
<svg style="left:294.0px;top:468.0px;" width="32" height="32" viewBox="0 0 16 16" fill="none"><path d="M8.1 4.35L8.25 4.5H13C13.83 4.5 14.5 5.17 14.5 6V12C14.5 12.83 13.83 13.5 13 13.5H3C2.17 13.5 1.5 12.83 1.5 12V4C1.5 3.17 2.17 2.5 3 2.5H6.1C6.25 2.5 6.39 2.56 6.48 2.65L8.1 4.35Z" fill="#43454a" stroke="#ced0d6" stroke-width="1.1"/><circle cx="5.9" cy="9.05" r="1.25" stroke="#ced0d6" stroke-width="1.05"/></svg>
<span class="s" style="left:331.8px;top:470px;font-size:27px;line-height:30px;letter-spacing:0.57px;color:#dfe1e5;">pokedexapp</span>
<svg style="left:290.0px;top:516.4px;" width="32" height="32" viewBox="0 0 16 16" fill="none"><path d="M6.25 4.5L9.75 8L6.25 11.5" stroke="#ced0d6" stroke-width="1.1" stroke-linecap="round" stroke-linejoin="round"/></svg>
<svg style="left:332.0px;top:516.0px;" width="32" height="32" viewBox="0 0 16 16" fill="none"><path d="M8.1 4.35L8.25 4.5H13C13.83 4.5 14.5 5.17 14.5 6V12C14.5 12.83 13.83 13.5 13 13.5H3C2.17 13.5 1.5 12.83 1.5 12V4C1.5 3.17 2.17 2.5 3 2.5H6.1C6.25 2.5 6.39 2.56 6.48 2.65L8.1 4.35Z" fill="#43454a" stroke="#ced0d6" stroke-width="1.1"/><circle cx="5.9" cy="9.05" r="1.25" stroke="#ced0d6" stroke-width="1.05"/></svg>
<span class="s" style="left:369.8px;top:518px;font-size:27px;line-height:30px;letter-spacing:0.06px;color:#dfe1e5;">data</span>
<svg style="left:290.0px;top:564.4px;" width="32" height="32" viewBox="0 0 16 16" fill="none"><path d="M6.25 4.5L9.75 8L6.25 11.5" stroke="#ced0d6" stroke-width="1.1" stroke-linecap="round" stroke-linejoin="round"/></svg>
<svg style="left:332.0px;top:564.0px;" width="32" height="32" viewBox="0 0 16 16" fill="none"><path d="M8.1 4.35L8.25 4.5H13C13.83 4.5 14.5 5.17 14.5 6V12C14.5 12.83 13.83 13.5 13 13.5H3C2.17 13.5 1.5 12.83 1.5 12V4C1.5 3.17 2.17 2.5 3 2.5H6.1C6.25 2.5 6.39 2.56 6.48 2.65L8.1 4.35Z" fill="#43454a" stroke="#ced0d6" stroke-width="1.1"/><circle cx="5.9" cy="9.05" r="1.25" stroke="#ced0d6" stroke-width="1.05"/></svg>
<span class="s" style="left:369.8px;top:566px;font-size:27px;line-height:30px;letter-spacing:1.68px;color:#dfe1e5;">di</span>
<svg style="left:290.0px;top:612.4px;" width="32" height="32" viewBox="0 0 16 16" fill="none"><path d="M6.25 4.5L9.75 8L6.25 11.5" stroke="#ced0d6" stroke-width="1.1" stroke-linecap="round" stroke-linejoin="round"/></svg>
<svg style="left:332.0px;top:612.0px;" width="32" height="32" viewBox="0 0 16 16" fill="none"><path d="M8.1 4.35L8.25 4.5H13C13.83 4.5 14.5 5.17 14.5 6V12C14.5 12.83 13.83 13.5 13 13.5H3C2.17 13.5 1.5 12.83 1.5 12V4C1.5 3.17 2.17 2.5 3 2.5H6.1C6.25 2.5 6.39 2.56 6.48 2.65L8.1 4.35Z" fill="#43454a" stroke="#ced0d6" stroke-width="1.1"/><circle cx="5.9" cy="9.05" r="1.25" stroke="#ced0d6" stroke-width="1.05"/></svg>
<span class="s" style="left:369.8px;top:614px;font-size:27px;line-height:30px;letter-spacing:0.43px;color:#dfe1e5;">domain</span>
<svg style="left:290.0px;top:660.4px;" width="32" height="32" viewBox="0 0 16 16" fill="none"><path d="M6.25 4.5L9.75 8L6.25 11.5" stroke="#ced0d6" stroke-width="1.1" stroke-linecap="round" stroke-linejoin="round"/></svg>
<svg style="left:332.0px;top:660.0px;" width="32" height="32" viewBox="0 0 16 16" fill="none"><path d="M8.1 4.35L8.25 4.5H13C13.83 4.5 14.5 5.17 14.5 6V12C14.5 12.83 13.83 13.5 13 13.5H3C2.17 13.5 1.5 12.83 1.5 12V4C1.5 3.17 2.17 2.5 3 2.5H6.1C6.25 2.5 6.39 2.56 6.48 2.65L8.1 4.35Z" fill="#43454a" stroke="#ced0d6" stroke-width="1.1"/><circle cx="5.9" cy="9.05" r="1.25" stroke="#ced0d6" stroke-width="1.05"/></svg>
<span class="s" style="left:369.8px;top:662px;font-size:27px;line-height:30px;letter-spacing:0.65px;color:#dfe1e5;">presentation</span>
<svg style="left:332.0px;top:708.0px;" width="32" height="32" viewBox="0 0 16 16" fill="none"><circle cx="8" cy="8" r="6.5" fill="#25324d" stroke="#548af7" stroke-width="1.1"/><path d="M10.6 6.1A3.2 3.2 0 1 0 10.6 9.9" stroke="#548af7" stroke-width="1.1" stroke-linecap="round"/><rect x="8.2" y="8.2" width="8" height="8" fill="#43454a"/><path d="M9.6 9.6H15.3L12.6 12.5L15.3 15.4H9.6Z" fill="#2f2936" stroke="#a571e6" stroke-width="1.1" stroke-linejoin="round"/></svg>
<span class="s" style="left:368.8px;top:710px;font-size:27px;line-height:30px;letter-spacing:0.42px;color:#dfe1e5;">PokemonApplication</span>
<svg style="left:176.0px;top:756.4px;" width="32" height="32" viewBox="0 0 16 16" fill="none"><path d="M6.25 4.5L9.75 8L6.25 11.5" stroke="#ced0d6" stroke-width="1.1" stroke-linecap="round" stroke-linejoin="round"/></svg>
<svg style="left:218.0px;top:756.0px;" width="32" height="32" viewBox="0 0 16 16" fill="none"><path d="M8.1 4.35L8.25 4.5H13C13.83 4.5 14.5 5.17 14.5 6V12C14.5 12.83 13.83 13.5 13 13.5H3C2.17 13.5 1.5 12.83 1.5 12V4C1.5 3.17 2.17 2.5 3 2.5H6.1C6.25 2.5 6.39 2.56 6.48 2.65L8.1 4.35Z" fill="#43454a" stroke="#ced0d6" stroke-width="1.1"/><circle cx="5.9" cy="9.05" r="1.25" stroke="#ced0d6" stroke-width="1.05"/></svg>
<span class="s" style="left:255.8px;top:758px;font-size:27px;line-height:30px;letter-spacing:1.09px;color:#dfe1e5;">com</span>
<span class="s" style="left:316.5px;top:758px;font-size:27px;line-height:30px;letter-spacing:0.7px;color:#84868b;">(androidTest)</span>
<svg style="left:176.0px;top:804.4px;" width="32" height="32" viewBox="0 0 16 16" fill="none"><path d="M6.25 4.5L9.75 8L6.25 11.5" stroke="#ced0d6" stroke-width="1.1" stroke-linecap="round" stroke-linejoin="round"/></svg>
<svg style="left:218.0px;top:804.0px;" width="32" height="32" viewBox="0 0 16 16" fill="none"><path d="M8.1 4.35L8.25 4.5H13C13.83 4.5 14.5 5.17 14.5 6V12C14.5 12.83 13.83 13.5 13 13.5H3C2.17 13.5 1.5 12.83 1.5 12V4C1.5 3.17 2.17 2.5 3 2.5H6.1C6.25 2.5 6.39 2.56 6.48 2.65L8.1 4.35Z" fill="#43454a" stroke="#ced0d6" stroke-width="1.1"/><circle cx="5.9" cy="9.05" r="1.25" stroke="#ced0d6" stroke-width="1.05"/></svg>
<span class="s" style="left:255.8px;top:806px;font-size:27px;line-height:30px;letter-spacing:1.09px;color:#dfe1e5;">com</span>
<span class="s" style="left:316.5px;top:806px;font-size:27px;line-height:30px;letter-spacing:0.8px;color:#84868b;">(test)</span>
<svg style="left:138.0px;top:852.4px;" width="32" height="32" viewBox="0 0 16 16" fill="none"><path d="M6.25 4.5L9.75 8L6.25 11.5" stroke="#ced0d6" stroke-width="1.1" stroke-linecap="round" stroke-linejoin="round"/></svg>
<svg style="left:180.0px;top:852.0px;" width="32" height="32" viewBox="0 0 16 16" fill="none"><path d="M8 13.5H3C2.17 13.5 1.5 12.83 1.5 12V4C1.5 3.17 2.17 2.5 3 2.5H6.1C6.25 2.5 6.39 2.56 6.48 2.65L8.25 4.5H13C13.83 4.5 14.5 5.17 14.5 6V8" fill="#25324d" stroke="#548af7" stroke-width="1.1"/><circle cx="12.5" cy="12.5" r="4.5" fill="#2b2d30"/><path d="M12.50 10.50L12.50 8.95M12.50 14.50L12.50 16.05M14.23 11.50L15.57 10.72M10.77 11.50L9.43 10.72M10.77 13.50L9.43 14.28M14.23 13.50L15.57 14.28" stroke="#548af7" stroke-width="1.05"/><circle cx="12.5" cy="12.5" r="1.0" fill="#548af7"/></svg>
<span class="s" style="left:219.8px;top:854px;font-size:27px;line-height:30px;letter-spacing:-1.2px;color:#dfe1e5;">java</span>
<span class="s" style="left:276px;top:854px;font-size:27px;line-height:30px;letter-spacing:0.42px;color:#84868b;">(generated)</span>
<svg style="left:138.0px;top:900.4px;" width="32" height="32" viewBox="0 0 16 16" fill="none"><path d="M6.25 4.5L9.75 8L6.25 11.5" stroke="#ced0d6" stroke-width="1.1" stroke-linecap="round" stroke-linejoin="round"/></svg>
<svg style="left:180.0px;top:900.0px;" width="32" height="32" viewBox="0 0 16 16" fill="none"><path d="M8 13.5H3C2.17 13.5 1.5 12.83 1.5 12V4C1.5 3.17 2.17 2.5 3 2.5H6.1C6.25 2.5 6.39 2.56 6.48 2.65L8.25 4.5H13C13.83 4.5 14.5 5.17 14.5 6V8" fill="#43454a" stroke="#ced0d6" stroke-width="1.1"/><rect x="8.7" y="8.8" width="8" height="8" fill="#2b2d30"/><path d="M9.3 10.3H16M9.3 12.5H16M9.3 14.7H16" stroke="#f2c55c" stroke-width="1.05"/></svg>
<span class="s" style="left:217.8px;top:902px;font-size:27px;line-height:30px;letter-spacing:0.4px;color:#dfe1e5;">res</span>
<svg style="left:180.0px;top:948.0px;" width="32" height="32" viewBox="0 0 16 16" fill="none"><path d="M8 13.5H3C2.17 13.5 1.5 12.83 1.5 12V4C1.5 3.17 2.17 2.5 3 2.5H6.1C6.25 2.5 6.39 2.56 6.48 2.65L8.25 4.5H13C13.83 4.5 14.5 5.17 14.5 6V8" fill="#43454a" stroke="#ced0d6" stroke-width="1.1"/><rect x="8.7" y="8.8" width="8" height="8" fill="#2b2d30"/><path d="M9.3 10.3H16M9.3 12.5H16M9.3 14.7H16" stroke="#f2c55c" stroke-width="1.05"/></svg>
<span class="s" style="left:217.8px;top:950px;font-size:27px;line-height:30px;letter-spacing:0.4px;color:#dfe1e5;">res</span>
<span class="s" style="left:265px;top:950px;font-size:27px;line-height:30px;letter-spacing:0.39px;color:#84868b;">(generated)</span>
<svg style="left:100.0px;top:996.4px;" width="32" height="32" viewBox="0 0 16 16" fill="none"><path d="M4.5 6.25L8 9.75L11.5 6.25" stroke="#ced0d6" stroke-width="1.1" stroke-linecap="round" stroke-linejoin="round"/></svg>
<svg style="left:142.0px;top:996.0px;" width="32" height="32" viewBox="0 0 16 16" fill="none"><path d="M12.5 2.8C13 2.1 14.2 2 15 3C15.8 4.2 15.2 6 13.5 8.4C12.6 9.7 11.6 10.8 11.2 13.1H10.2C10.1 12.2 9.6 11.2 8.55 11.2C7.5 11.2 7 12.2 6.9 13.1H5.6C5.5 12.2 5 11.2 3.9 11.2C2.8 11.2 2.4 12.2 2.3 13.1H0.65C0.5 9.5 1.8 6.6 3.9 5.1C5.2 4.1 6.6 3.7 7.9 3.8C10 4 11.6 5.7 13.5 5.9C14.3 5.95 14.8 5.6 15.1 5M3.9 5.1C3.6 6.5 3.5 7.8 4 8.5C4.7 9.4 6 9 6.9 8.4C7.4 8 7.7 7.6 7.9 7.2" stroke="#ced0d6" stroke-width="1.1" stroke-linecap="round" stroke-linejoin="round"/><circle cx="9.9" cy="7.1" r="0.6" fill="#ced0d6"/></svg>
<span class="s" style="left:179.8px;top:998px;font-size:27px;line-height:30px;letter-spacing:0.23px;color:#dfe1e5;">Gradle Scripts</span>
<svg style="left:180.0px;top:1044.0px;" width="32" height="32" viewBox="0 0 16 16" fill="none"><g transform="translate(0,-0.9)"><path d="M12.5 2.8C13 2.1 14.2 2 15 3C15.8 4.2 15.2 6 13.5 8.4C12.6 9.7 11.6 10.8 11.2 13.1H10.2C10.1 12.2 9.6 11.2 8.55 11.2C7.5 11.2 7 12.2 6.9 13.1H5.6C5.5 12.2 5 11.2 3.9 11.2C2.8 11.2 2.4 12.2 2.3 13.1H0.65C0.5 9.5 1.8 6.6 3.9 5.1C5.2 4.1 6.6 3.7 7.9 3.8C10 4 11.6 5.7 13.5 5.9C14.3 5.95 14.8 5.6 15.1 5M3.9 5.1C3.6 6.5 3.5 7.8 4 8.5C4.7 9.4 6 9 6.9 8.4C7.4 8 7.7 7.6 7.9 7.2" stroke="#ced0d6" stroke-width="1.1" stroke-linecap="round" stroke-linejoin="round"/><circle cx="9.9" cy="7.1" r="0.6" fill="#ced0d6"/></g><rect x="8.2" y="8.2" width="8" height="8" fill="#2b2d30"/><path d="M9.6 9.6H15.3L12.6 12.5L15.3 15.4H9.6Z" fill="#2f2936" stroke="#a571e6" stroke-width="1.1" stroke-linejoin="round"/></svg>
<span class="s" style="left:217.8px;top:1046px;font-size:27px;line-height:30px;letter-spacing:0.47px;color:#dfe1e5;">build.gradle.kts</span>
<span class="s" style="left:414.5px;top:1046px;font-size:27px;line-height:30px;letter-spacing:0.24px;color:#84868b;">(Project: PokedexApp)</span>
<svg style="left:180.0px;top:1092.0px;" width="32" height="32" viewBox="0 0 16 16" fill="none"><g transform="translate(0,-0.9)"><path d="M12.5 2.8C13 2.1 14.2 2 15 3C15.8 4.2 15.2 6 13.5 8.4C12.6 9.7 11.6 10.8 11.2 13.1H10.2C10.1 12.2 9.6 11.2 8.55 11.2C7.5 11.2 7 12.2 6.9 13.1H5.6C5.5 12.2 5 11.2 3.9 11.2C2.8 11.2 2.4 12.2 2.3 13.1H0.65C0.5 9.5 1.8 6.6 3.9 5.1C5.2 4.1 6.6 3.7 7.9 3.8C10 4 11.6 5.7 13.5 5.9C14.3 5.95 14.8 5.6 15.1 5M3.9 5.1C3.6 6.5 3.5 7.8 4 8.5C4.7 9.4 6 9 6.9 8.4C7.4 8 7.7 7.6 7.9 7.2" stroke="#ced0d6" stroke-width="1.1" stroke-linecap="round" stroke-linejoin="round"/><circle cx="9.9" cy="7.1" r="0.6" fill="#ced0d6"/></g><rect x="8.2" y="8.2" width="8" height="8" fill="#2b2d30"/><path d="M9.6 9.6H15.3L12.6 12.5L15.3 15.4H9.6Z" fill="#2f2936" stroke="#a571e6" stroke-width="1.1" stroke-linejoin="round"/></svg>
<span class="s" style="left:217.8px;top:1094px;font-size:27px;line-height:30px;letter-spacing:0.47px;color:#dfe1e5;">build.gradle.kts</span>
<span class="s" style="left:414.5px;top:1094px;font-size:27px;line-height:30px;letter-spacing:0.24px;color:#84868b;">(Module :app)</span>
<svg style="left:180.0px;top:1140.0px;" width="32" height="32" viewBox="0 0 16 16" fill="none"><path d="M2 3.5H14M2 6.5H10.5M2 9.5H14M2 12.5H10.5" stroke="#ced0d6" stroke-width="1.05" stroke-linecap="round"/></svg>
<span class="s" style="left:217.8px;top:1142px;font-size:27px;line-height:30px;letter-spacing:0.61px;color:#dfe1e5;">proguard-rules.pro</span>
<span class="s" style="left:457.8px;top:1142px;font-size:27px;line-height:30px;letter-spacing:0.07px;color:#84868b;">(ProGuard Rules for ":app")</span>
<svg style="left:180.0px;top:1188.0px;" width="32" height="32" viewBox="0 0 16 16" fill="none"><path d="M6.65 1.59L9.35 1.59C9.64 2.61 9.66 3.18 10.48 3.71C11.35 4.15 11.85 3.89 12.88 3.63L12.88 3.63L14.23 5.96C13.49 6.72 13.01 7.03 12.95 8.00C13.01 8.97 13.49 9.28 14.23 10.04L14.23 10.04L12.88 12.37C11.85 12.11 11.35 11.85 10.48 12.29C9.66 12.82 9.64 13.39 9.35 14.41L9.35 14.41L6.65 14.41C6.36 13.39 6.34 12.82 5.53 12.29C4.65 11.85 4.15 12.11 3.12 12.37L3.12 12.37L1.77 10.04C2.51 9.28 2.99 8.97 3.05 8.00C2.99 7.03 2.51 6.72 1.77 5.96L1.77 5.96L3.12 3.63C4.15 3.89 4.65 4.15 5.52 3.71C6.34 3.18 6.36 2.61 6.65 1.59Z" stroke="#ced0d6" stroke-width="1.05" stroke-linejoin="round"/><circle cx="8" cy="8" r="2.3" stroke="#ced0d6" stroke-width="1.05"/></svg>
<span class="s" style="left:217.8px;top:1190px;font-size:27px;line-height:30px;letter-spacing:0.51px;color:#dfe1e5;">gradle.properties</span>
<span class="s" style="left:436.8px;top:1190px;font-size:27px;line-height:30px;letter-spacing:0.32px;color:#84868b;">(Project Properties)</span>
<svg style="left:180.0px;top:1236.0px;" width="32" height="32" viewBox="0 0 16 16" fill="none"><path d="M6.65 1.59L9.35 1.59C9.64 2.61 9.66 3.18 10.48 3.71C11.35 4.15 11.85 3.89 12.88 3.63L12.88 3.63L14.23 5.96C13.49 6.72 13.01 7.03 12.95 8.00C13.01 8.97 13.49 9.28 14.23 10.04L14.23 10.04L12.88 12.37C11.85 12.11 11.35 11.85 10.48 12.29C9.66 12.82 9.64 13.39 9.35 14.41L9.35 14.41L6.65 14.41C6.36 13.39 6.34 12.82 5.53 12.29C4.65 11.85 4.15 12.11 3.12 12.37L3.12 12.37L1.77 10.04C2.51 9.28 2.99 8.97 3.05 8.00C2.99 7.03 2.51 6.72 1.77 5.96L1.77 5.96L3.12 3.63C4.15 3.89 4.65 4.15 5.52 3.71C6.34 3.18 6.36 2.61 6.65 1.59Z" stroke="#ced0d6" stroke-width="1.05" stroke-linejoin="round"/><circle cx="8" cy="8" r="2.3" stroke="#ced0d6" stroke-width="1.05"/></svg>
<span class="s" style="left:217.8px;top:1238px;font-size:27px;line-height:30px;letter-spacing:0.71px;color:#dfe1e5;">gradle-wrapper.properties</span>
<span class="s" style="left:550.5px;top:1238px;font-size:27px;line-height:30px;letter-spacing:0.13px;color:#84868b;">(Gradle Version)</span>
<svg style="left:180.0px;top:1284.0px;" width="32" height="32" viewBox="0 0 16 16" fill="none"><rect x="2.5" y="2.5" width="11" height="11" rx="1.8" fill="#25324d" stroke="#548af7" stroke-width="1.1"/><path d="M5.3 5.15H10.7M8 5.15V11.2" stroke="#548af7" stroke-width="1.05" stroke-linecap="round"/></svg>
<span class="s" style="left:217.8px;top:1286px;font-size:27px;line-height:30px;letter-spacing:0.4px;color:#dfe1e5;">libs.versions.toml</span>
<span class="s" style="left:439.2px;top:1286px;font-size:27px;line-height:30px;letter-spacing:0.28px;color:#84868b;">(Version Catalog)</span>
<svg style="left:180.0px;top:1332.0px;" width="32" height="32" viewBox="0 0 16 16" fill="none"><path d="M6.65 1.59L9.35 1.59C9.64 2.61 9.66 3.18 10.48 3.71C11.35 4.15 11.85 3.89 12.88 3.63L12.88 3.63L14.23 5.96C13.49 6.72 13.01 7.03 12.95 8.00C13.01 8.97 13.49 9.28 14.23 10.04L14.23 10.04L12.88 12.37C11.85 12.11 11.35 11.85 10.48 12.29C9.66 12.82 9.64 13.39 9.35 14.41L9.35 14.41L6.65 14.41C6.36 13.39 6.34 12.82 5.53 12.29C4.65 11.85 4.15 12.11 3.12 12.37L3.12 12.37L1.77 10.04C2.51 9.28 2.99 8.97 3.05 8.00C2.99 7.03 2.51 6.72 1.77 5.96L1.77 5.96L3.12 3.63C4.15 3.89 4.65 4.15 5.52 3.71C6.34 3.18 6.36 2.61 6.65 1.59Z" stroke="#ced0d6" stroke-width="1.05" stroke-linejoin="round"/><circle cx="8" cy="8" r="2.3" stroke="#ced0d6" stroke-width="1.05"/></svg>
<span class="s" style="left:217.8px;top:1334px;font-size:27px;line-height:30px;letter-spacing:0.46px;color:#dfe1e5;">local.properties</span>
<span class="s" style="left:416.1px;top:1334px;font-size:27px;line-height:30px;letter-spacing:-0.04px;color:#84868b;">(SDK Location)</span>
<svg style="left:180.0px;top:1380.0px;" width="32" height="32" viewBox="0 0 16 16" fill="none"><g transform="translate(0,-0.9)"><path d="M12.5 2.8C13 2.1 14.2 2 15 3C15.8 4.2 15.2 6 13.5 8.4C12.6 9.7 11.6 10.8 11.2 13.1H10.2C10.1 12.2 9.6 11.2 8.55 11.2C7.5 11.2 7 12.2 6.9 13.1H5.6C5.5 12.2 5 11.2 3.9 11.2C2.8 11.2 2.4 12.2 2.3 13.1H0.65C0.5 9.5 1.8 6.6 3.9 5.1C5.2 4.1 6.6 3.7 7.9 3.8C10 4 11.6 5.7 13.5 5.9C14.3 5.95 14.8 5.6 15.1 5M3.9 5.1C3.6 6.5 3.5 7.8 4 8.5C4.7 9.4 6 9 6.9 8.4C7.4 8 7.7 7.6 7.9 7.2" stroke="#ced0d6" stroke-width="1.1" stroke-linecap="round" stroke-linejoin="round"/><circle cx="9.9" cy="7.1" r="0.6" fill="#ced0d6"/></g><rect x="8.2" y="8.2" width="8" height="8" fill="#2b2d30"/><path d="M9.6 9.6H15.3L12.6 12.5L15.3 15.4H9.6Z" fill="#2f2936" stroke="#a571e6" stroke-width="1.1" stroke-linejoin="round"/></svg>
<span class="s" style="left:218.8px;top:1382px;font-size:27px;line-height:30px;letter-spacing:0.49px;color:#dfe1e5;">settings.gradle.kts</span>
<span class="s" style="left:453.2px;top:1382px;font-size:27px;line-height:30px;letter-spacing:0.38px;color:#84868b;">(Project Settings)</span>
<div style="left:1000px;top:160px;width:1936px;height:2px;background:#393b40;"></div>
<div style="left:1310px;top:154px;width:412px;height:7.5px;border-radius:4px;background:#4a78e8"></div>
<svg style="left:1024.0px;top:104.0px;" width="32" height="32" viewBox="0 0 16 16" fill="none"><circle cx="8" cy="8" r="6.5" fill="#25324d" stroke="#548af7" stroke-width="1.1"/><path d="M10.6 6.1A3.2 3.2 0 1 0 10.6 9.9" stroke="#548af7" stroke-width="1.1" stroke-linecap="round"/><rect x="8.2" y="8.2" width="8" height="8" fill="#1e1f22"/><path d="M9.6 9.6H15.3L12.6 12.5L15.3 15.4H9.6Z" fill="#2f2936" stroke="#a571e6" stroke-width="1.1" stroke-linejoin="round"/></svg>
<span class="s" style="left:1065.5px;top:106px;font-size:27px;line-height:30px;letter-spacing:0.77px;color:#ced0d6;">MainActivity.kt</span>
<svg style="left:1334.0px;top:104.0px;" width="32" height="32" viewBox="0 0 16 16" fill="none"><circle cx="8" cy="8" r="6.5" fill="#25324d" stroke="#548af7" stroke-width="1.1"/><path d="M10.6 6.1A3.2 3.2 0 1 0 10.6 9.9" stroke="#548af7" stroke-width="1.1" stroke-linecap="round"/><rect x="8.2" y="8.2" width="8" height="8" fill="#1e1f22"/><path d="M9.6 9.6H15.3L12.6 12.5L15.3 15.4H9.6Z" fill="#2f2936" stroke="#a571e6" stroke-width="1.1" stroke-linejoin="round"/></svg>
<span class="s" style="left:1374.5px;top:106px;font-size:27px;line-height:30px;letter-spacing:0.43px;color:#dfe1e5;">PokemonApplication.kt</span>
<svg style="left:1744.0px;top:104.0px;" width="32" height="32" viewBox="0 0 16 16" fill="none"><circle cx="8" cy="8" r="6.5" fill="#25324d" stroke="#548af7" stroke-width="1.1"/><path d="M10.6 6.1A3.2 3.2 0 1 0 10.6 9.9" stroke="#548af7" stroke-width="1.1" stroke-linecap="round"/><rect x="8.2" y="8.2" width="8" height="8" fill="#1e1f22"/><path d="M9.6 9.6H15.3L12.6 12.5L15.3 15.4H9.6Z" fill="#2f2936" stroke="#a571e6" stroke-width="1.1" stroke-linejoin="round"/></svg>
<span class="s" style="left:1785px;top:106px;font-size:27px;line-height:30px;letter-spacing:0.28px;color:#ced0d6;">PokemonDetailUiState.kt</span>
<svg style="left:2178.0px;top:104.0px;" width="32" height="32" viewBox="0 0 16 16" fill="none"><circle cx="8" cy="8" r="6.5" fill="#25324d" stroke="#548af7" stroke-width="1.1"/><path d="M10.6 6.1A3.2 3.2 0 1 0 10.6 9.9" stroke="#548af7" stroke-width="1.1" stroke-linecap="round"/><rect x="8.2" y="8.2" width="8" height="8" fill="#1e1f22"/><path d="M9.6 9.6H15.3L12.6 12.5L15.3 15.4H9.6Z" fill="#2f2936" stroke="#a571e6" stroke-width="1.1" stroke-linejoin="round"/></svg>
<span class="s" style="left:2219px;top:106px;font-size:27px;line-height:30px;letter-spacing:0.35px;color:#ced0d6;">PokemonDetailViewModel.kt</span>
<svg style="left:1674.2px;top:103.8px;" width="32" height="32" viewBox="0 0 16 16" fill="none"><path d="M4.7 4.7L11.3 11.3M11.3 4.7L4.7 11.3" stroke="#7f838a" stroke-width="1.0" stroke-linecap="round" stroke-linejoin="round" /></svg>
<svg style="left:2646.3px;top:101.0px;" width="36" height="36" viewBox="0 0 16 16" fill="none"><path d="M4.5 6.25L8 9.75L11.5 6.25" stroke="#ced0d6" stroke-width="1.1" stroke-linecap="round" stroke-linejoin="round"/></svg>
<div style="left:2694px;top:98px;width:48px;height:44px;background:#393b40;border-radius:9px;"></div>
<svg style="left:2702.0px;top:104.0px;" width="32" height="32" viewBox="0 0 16 16" fill="none"><path d="M3 3.4H13M3 6.4H13M3 9.5H13M3 12.6H13" stroke="#ced0d6" stroke-width="1.05" stroke-linecap="round" stroke-linejoin="round" /></svg>
<svg style="left:2758.0px;top:104.0px;" width="32" height="32" viewBox="0 0 16 16" fill="none"><path d="M1.2 3.4H5.6M1.2 6.4H5.6M1.2 9.5H5.6M1.2 12.6H5.6" stroke="#ced0d6" stroke-width="1.05" stroke-linecap="round" stroke-linejoin="round" /><rect x="8.4" y="2.8" width="6.2" height="10.6" rx="1.6" stroke="#ced0d6" stroke-width="1.1"/></svg>
<svg style="left:2814.0px;top:104.0px;" width="32" height="32" viewBox="0 0 16 16" fill="none"><rect x="2.4" y="2.4" width="11.2" height="11.2" rx="1.8" stroke="#ced0d6" stroke-width="1.1"/><circle cx="10.4" cy="5.6" r="1.4" stroke="#ced0d6" stroke-width="1.05"/><path d="M2.6 9.4L4.6 7.9L13 13.3" stroke="#ced0d6" stroke-width="1.1" stroke-linecap="round" stroke-linejoin="round" /></svg>
<div style="left:2864px;top:100px;width:2px;height:40px;background:#393b40;"></div>
<svg style="left:2882.0px;top:104.0px;" width="32" height="32" viewBox="0 0 16 16" fill="none"><circle cx="8" cy="3.2" r="1.1" fill="#ced0d6"/><circle cx="8" cy="8" r="1.1" fill="#ced0d6"/><circle cx="8" cy="12.8" r="1.1" fill="#ced0d6"/></svg>
<div style="left:1000px;top:290px;width:1936px;height:64px;background:#26282e;"></div>
<div style="left:1162px;top:162px;width:2px;height:1666px;background:#313438;"></div>
<div style="left:1305px;top:290px;width:410px;height:64px;background:#3a3c3b;"></div>
<div style="left:1738px;top:290px;width:23px;height:64px;background:#43454a;"></div>
<div style="left:1168px;top:354px;width:23px;height:64px;background:#43454a;"></div>
<svg style="left:1166px;top:207px;" width="28" height="16" viewBox="0 0 28 16" fill="none"><path d="M2.2 11.7C5 8.5 7.5 4 10.3 4C13 4 13.5 10.5 16.3 10.5C19 10.5 21 6.5 23.7 3.5" stroke="#ebcd5f" stroke-width="3" stroke-linecap="round"/></svg>
<span class="m" style="left:1039.5px;top:176px;font-size:39px;line-height:44px;letter-spacing:0.0px;color:#4b5059;">1</span>
<span class="m" style="left:1040px;top:240px;font-size:39px;line-height:44px;letter-spacing:0.0px;color:#4b5059;">2</span>
<span class="m" style="left:1040px;top:304px;font-size:39px;line-height:44px;letter-spacing:0.0px;color:#a1a3ab;">3</span>
<span class="m" style="left:1041px;top:368px;font-size:39px;line-height:44px;letter-spacing:0.0px;color:#4b5059;">4</span>
<span class="m" style="left:1166.2px;top:176px;font-size:39px;line-height:44px;letter-spacing:-0.51px;color:#cf8e6d;">package</span>
<span class="m" style="left:1350.0px;top:176px;font-size:39px;line-height:44px;letter-spacing:-0.6px;color:#bcbec4;">com.app.pokedexapp</span>
<span class="m" style="left:1167.2px;top:304px;font-size:39px;line-height:44px;letter-spacing:-0.74px;color:#cf8e6d;">class</span>
<span class="m" style="left:1303.3px;top:304px;font-size:39px;line-height:44px;letter-spacing:-0.48px;color:#6f737a;">PokemonApplication</span>
<span class="m" style="left:1736.45px;top:304px;font-size:39px;line-height:44px;letter-spacing:0.0px;color:#7e8288;">{</span>
<span class="m" style="left:1166.2px;top:368px;font-size:39px;line-height:44px;letter-spacing:0.0px;color:#7e8288;">}</span>
<svg style="left:2741.0px;top:172.2px;" width="30" height="30" viewBox="0 0 16 16" fill="none"><path d="M8 2.2C8.5 2.2 8.9 2.5 9.1 2.9L14.1 11.9C14.6 12.8 14 13.8 13 13.8H3C2 13.8 1.4 12.8 1.9 11.9L6.9 2.9C7.1 2.5 7.5 2.2 8 2.2Z" fill="#c9a657"/><path d="M8 5.6V9.4" stroke="#1e1f22" stroke-width="1.6" stroke-linecap="round"/><circle cx="8" cy="11.8" r="0.95" fill="#1e1f22"/></svg>
<svg style="left:2773.6px;top:178px;" width="12" height="20" viewBox="0 0 12 20" fill="none"><path d="M9.3 1.5V18.4H6.9V4.6L2.1 7.3L0.9 5.3L7.3 1.5Z" fill="#bcbec4"/></svg>
<svg style="left:2797.0px;top:172.2px;" width="30" height="30" viewBox="0 0 16 16" fill="none"><path d="M8 2.2C8.5 2.2 8.9 2.5 9.1 2.9L14.1 11.9C14.6 12.8 14 13.8 13 13.8H3C2 13.8 1.4 12.8 1.9 11.9L6.9 2.9C7.1 2.5 7.5 2.2 8 2.2Z" fill="#86724a"/><path d="M8 5.6V9.4" stroke="#1e1f22" stroke-width="1.6" stroke-linecap="round"/><circle cx="8" cy="11.8" r="0.95" fill="#1e1f22"/></svg>
<svg style="left:2829.7px;top:178px;" width="12" height="20" viewBox="0 0 12 20" fill="none"><path d="M9.3 1.5V18.4H6.9V4.6L2.1 7.3L0.9 5.3L7.3 1.5Z" fill="#bcbec4"/></svg>
<svg style="left:2854.0px;top:172.3px;" width="32" height="32" viewBox="0 0 16 16" fill="none"><path d="M4.5 9.75L8 6.25L11.5 9.75" stroke="#bcbec4" stroke-width="1.1" stroke-linecap="round" stroke-linejoin="round"/></svg>
<svg style="left:2896.0px;top:172.3px;" width="32" height="32" viewBox="0 0 16 16" fill="none"><path d="M4.5 6.25L8 9.75L11.5 6.25" stroke="#bcbec4" stroke-width="1.1" stroke-linecap="round" stroke-linejoin="round"/></svg>
<div style="left:2908px;top:214px;width:28px;height:4px;background:#c9a84f;"></div>
<div style="left:2908px;top:342px;width:28px;height:4px;background:#5b7a69;"></div>
<svg style="left:15.0px;top:1843.0px;" width="30" height="30" viewBox="0 0 16 16" fill="none"><rect x="4.3" y="4.3" width="7.4" height="7.4" rx="1.8" fill="#25324d" stroke="#548af7" stroke-width="1.2"/></svg>
<span class="s" style="left:44.8px;top:1842px;font-size:27px;line-height:30px;letter-spacing:0.63px;color:#a8abb2;">Pokedex2025</span>
<svg style="left:259.0px;top:1843.0px;" width="30" height="30" viewBox="0 0 16 16" fill="none"><rect x="4.3" y="4.3" width="7.4" height="7.4" rx="1.8" fill="#25324d" stroke="#548af7" stroke-width="1.2"/></svg>
<span class="s" style="left:289.8px;top:1842px;font-size:27px;line-height:30px;letter-spacing:1.08px;color:#a8abb2;">app</span>
<span class="s" style="left:386.8px;top:1842px;font-size:27px;line-height:30px;letter-spacing:0.5px;color:#a8abb2;">src</span>
<svg style="left:465.3px;top:1843.0px;" width="30" height="30" viewBox="0 0 16 16" fill="none"><rect x="4.3" y="4.3" width="7.4" height="7.4" rx="1.8" fill="#25324d" stroke="#548af7" stroke-width="1.2"/></svg>
<span class="s" style="left:496px;top:1842px;font-size:27px;line-height:30px;letter-spacing:0.03px;color:#a8abb2;">main</span>
<span class="s" style="left:604.9px;top:1842px;font-size:27px;line-height:30px;letter-spacing:-0.7px;color:#a8abb2;">java</span>
<span class="s" style="left:701.2px;top:1842px;font-size:27px;line-height:30px;letter-spacing:1.79px;color:#a8abb2;">com</span>
<span class="s" style="left:803px;top:1842px;font-size:27px;line-height:30px;letter-spacing:1.48px;color:#a8abb2;">app</span>
<span class="s" style="left:899.9px;top:1842px;font-size:27px;line-height:30px;letter-spacing:0.61px;color:#a8abb2;">pokedexapp</span>
<svg style="left:224.2px;top:1839.5px;" width="34" height="34" viewBox="0 0 16 16" fill="none"><path d="M6.25 4.5L9.75 8L6.25 11.5" stroke="#9da0a8" stroke-width="1.0" stroke-linecap="round" stroke-linejoin="round"/></svg>
<svg style="left:344.3px;top:1839.5px;" width="34" height="34" viewBox="0 0 16 16" fill="none"><path d="M6.25 4.5L9.75 8L6.25 11.5" stroke="#9da0a8" stroke-width="1.0" stroke-linecap="round" stroke-linejoin="round"/></svg>
<svg style="left:431.0px;top:1839.5px;" width="34" height="34" viewBox="0 0 16 16" fill="none"><path d="M6.25 4.5L9.75 8L6.25 11.5" stroke="#9da0a8" stroke-width="1.0" stroke-linecap="round" stroke-linejoin="round"/></svg>
<svg style="left:562.5px;top:1839.5px;" width="34" height="34" viewBox="0 0 16 16" fill="none"><path d="M6.25 4.5L9.75 8L6.25 11.5" stroke="#9da0a8" stroke-width="1.0" stroke-linecap="round" stroke-linejoin="round"/></svg>
<svg style="left:661.0px;top:1839.5px;" width="34" height="34" viewBox="0 0 16 16" fill="none"><path d="M6.25 4.5L9.75 8L6.25 11.5" stroke="#9da0a8" stroke-width="1.0" stroke-linecap="round" stroke-linejoin="round"/></svg>
<svg style="left:763.0px;top:1839.5px;" width="34" height="34" viewBox="0 0 16 16" fill="none"><path d="M6.25 4.5L9.75 8L6.25 11.5" stroke="#9da0a8" stroke-width="1.0" stroke-linecap="round" stroke-linejoin="round"/></svg>
<svg style="left:859.5px;top:1839.5px;" width="34" height="34" viewBox="0 0 16 16" fill="none"><path d="M6.25 4.5L9.75 8L6.25 11.5" stroke="#9da0a8" stroke-width="1.0" stroke-linecap="round" stroke-linejoin="round"/></svg>
<svg style="left:1060.5px;top:1839.5px;" width="34" height="34" viewBox="0 0 16 16" fill="none"><path d="M6.25 4.5L9.75 8L6.25 11.5" stroke="#9da0a8" stroke-width="1.0" stroke-linecap="round" stroke-linejoin="round"/></svg>
<svg style="left:1102.5px;top:1842.5px;" width="31" height="31" viewBox="0 0 16 16" fill="none"><circle cx="8" cy="8" r="6.5" fill="#25324d" stroke="#548af7" stroke-width="1.1"/><path d="M10.6 6.1A3.2 3.2 0 1 0 10.6 9.9" stroke="#548af7" stroke-width="1.1" stroke-linecap="round"/><rect x="8.2" y="8.2" width="8" height="8" fill="#2b2d30"/><path d="M9.6 9.6H15.3L12.6 12.5L15.3 15.4H9.6Z" fill="#2f2936" stroke="#a571e6" stroke-width="1.1" stroke-linejoin="round"/></svg>
<span class="s" style="left:1141px;top:1842px;font-size:27px;line-height:30px;letter-spacing:0.39px;color:#a8abb2;">PokemonApplication</span>
<svg style="left:2244px;top:1840.1px;" width="36" height="36" viewBox="0 0 36 36" fill="none"><circle cx="18" cy="18" r="14.1" stroke="#b4b7be" stroke-width="4"/><path d="M11.8 15.5L16.45 22.45L18 19.65L19.25 22.45L25.7 13.05" stroke="#b4b7be" stroke-width="2.1" stroke-linecap="round" stroke-linejoin="round" /></svg>
<span class="s" style="left:2289px;top:1842px;font-size:27px;line-height:30px;letter-spacing:0.33px;color:#a8abb2;">20 mins</span>
<span class="s" style="left:2417px;top:1842px;font-size:27px;line-height:30px;letter-spacing:0.49px;color:#a8abb2;">3:25</span>
<span class="s" style="left:2503.5px;top:1842px;font-size:27px;line-height:30px;letter-spacing:-2.22px;color:#a8abb2;">LF</span>
<span class="s" style="left:2565.5px;top:1842px;font-size:27px;line-height:30px;letter-spacing:0.88px;color:#a8abb2;">UTF-8</span>
<svg style="left:2680px;top:1844px;" width="28" height="28" viewBox="0 0 28 28" fill="none"><path d="M4.6 2H23.3C24.7 2 25.8 3.1 25.8 4.5V23.8C25.8 25 24.6 25.5 23.7 24.8L18.4 20.6H4.6C3.2 20.6 2.1 19.5 2.1 18.1V4.5C2.1 3.1 3.2 2 4.6 2Z" stroke="#d3d5da" stroke-width="2.3" stroke-linecap="round" stroke-linejoin="round" /><path d="M13.9 6.2V13.6" stroke="#d3d5da" stroke-width="2.3"/><rect x="12.75" y="15.2" width="2.3" height="2.1" fill="#d3d5da"/></svg>
<svg style="left:2741.35px;top:1841.85px;" width="32.5" height="32.5" viewBox="0 0 20 20" fill="none"><path d="M10 1.6C10.5 6.6 13.4 9.5 18.4 10C13.4 10.5 10.5 13.4 10 18.4C9.5 13.4 6.6 10.5 1.6 10C6.6 9.5 9.5 6.6 10 1.6Z" fill="#d6d8dd"/></svg>
<span class="s" style="left:2807px;top:1842px;font-size:27px;line-height:30px;letter-spacing:0.25px;color:#a8abb2;">4 spaces</span>
<svg style="left:2954px;top:1844px;" width="30" height="28" viewBox="0 0 30 28" fill="none"><rect x="3.2" y="11.1" width="17.7" height="13.85" rx="3.6" stroke="#d8dade" stroke-width="2.3"/><path d="M17.1 10.2V8.1A4.97 4.97 0 0 1 27.05 8.1V12.1" stroke="#d8dade" stroke-width="2.3" stroke-linecap="round" stroke-linejoin="round" /><path d="M12 15.1V21.1" stroke="#d8dade" stroke-width="2.1"/></svg>
</body></html>
